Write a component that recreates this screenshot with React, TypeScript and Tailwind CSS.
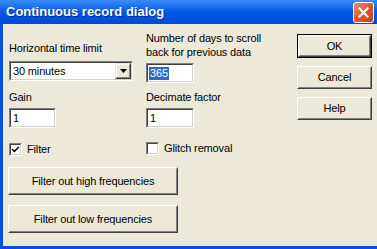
import { Check } from 'lucide-react';

const font = "font-['Liberation_Sans',Arial,sans-serif]";

// classic sunken field border
const Field = ({ value, selected, width }: { value: string; selected?: boolean; width: string }) => (
    <div className={`${width} h-[20px] border border-t-[#808080] border-l-[#808080] border-b-white border-r-white`}>
        <div className="h-full border border-t-[#404040] border-l-[#404040] border-b-[#d4d0c8] border-r-[#d4d0c8] bg-white flex items-center pl-[1px]">
            {selected ? (
                <span className="bg-[#316ac5] text-white leading-[13px] px-[1px]">{value}</span>
            ) : (
                <span className="leading-[13px] px-[1px]">{value}</span>
            )}
        </div>
    </div>
);

const Button = ({ label, width, height, isDefault }: { label: string; width: string; height: string; isDefault?: boolean }) => (
    <div className={`${width} ${height} ${isDefault ? 'border border-black' : ''}`}>
        <div className="h-full border border-t-white border-l-white border-b-[#404040] border-r-[#404040]">
            <div className="h-full border border-t-[#ece9d8] border-l-[#ece9d8] border-b-[#808080] border-r-[#808080] flex items-center justify-center bg-[#ece9d8]">
                {label}
            </div>
        </div>
    </div>
);

const CheckBox = ({ label, checked }: { label: string; checked?: boolean }) => (
    <div className="flex items-center gap-[5px]">
        <div className="w-[13px] h-[13px] border border-t-[#808080] border-l-[#808080] border-b-white border-r-white">
            <div className="h-full border border-t-[#404040] border-l-[#404040] border-b-[#d4d0c8] border-r-[#d4d0c8] bg-white flex items-center justify-center">
                {checked && <Check size={9} strokeWidth={4} className="text-black" />}
            </div>
        </div>
        <span className="leading-[13px]">{label}</span>
    </div>
);

export default function App() {
    return (
        <div className={`w-[377px] h-[249px] flex flex-col overflow-hidden ${font} text-[11px] tracking-[-0.15px] text-black`}>
            {/* title bar */}
            <div className="h-[24px] shrink-0 bg-gradient-to-b from-[#3a8cf8] via-[#0058e8] to-[#0049d6] flex items-center justify-between pl-[6px] pr-[3px]">
                <span className="text-white font-bold text-[13px] tracking-normal [text-shadow:1px_1px_0_#0a2a8a]">Continuous record dialog</span>
                <div className="w-[21px] h-[21px] rounded-[3px] border border-white bg-gradient-to-br from-[#f08a6a] via-[#e2552f] to-[#c8401c] flex items-center justify-center">
                    <svg width="11" height="11" viewBox="0 0 11 11">
                        <path d="M1.5 1.5 L9.5 9.5 M9.5 1.5 L1.5 9.5" stroke="white" strokeWidth="2.2" strokeLinecap="square" />
                    </svg>
                </div>
            </div>

            {/* body */}
            <div className="flex-1 bg-[#0050e0] pl-[3px] pb-[3px]">
                <div className="h-full bg-[#ece9d8] pl-[6px] pt-[7px]">
                    <div className="flex">
                        {/* left column */}
                        <div className="w-[137px] flex flex-col">
                            <div className="mt-[10px] h-[14px] leading-[14px]">Horizontal time limit</div>
                            <div className="mt-[6px] w-[124px] h-[20px] border border-t-[#808080] border-l-[#808080] border-b-white border-r-white">
                                <div className="h-full border border-t-[#404040] border-l-[#404040] border-b-[#d4d0c8] border-r-[#d4d0c8] bg-white flex items-center justify-between">
                                    <span className="pl-[2px] leading-[13px]">30 minutes</span>
                                    <div className="w-[16px] h-[16px] border border-t-[#ece9d8] border-l-[#ece9d8] border-b-[#404040] border-r-[#404040]">
                                        <div className="h-full border border-t-white border-l-white border-b-[#808080] border-r-[#808080] bg-[#ece9d8] flex items-center justify-center">
                                            <svg width="7" height="4" viewBox="0 0 7 4">
                                                <path d="M0 0 H7 L3.5 4 Z" fill="black" />
                                            </svg>
                                        </div>
                                    </div>
                                </div>
                            </div>
                            <div className="mt-[9px] h-[14px] leading-[14px]">Gain</div>
                            <div className="mt-[4px]">
                                <Field value="1" width="w-[47px]" />
                            </div>
                            <div className="mt-[15px]">
                                <CheckBox label="Filter" checked />
                            </div>
                        </div>

                        {/* middle column */}
                        <div className="w-[151px] flex flex-col">
                            <div className="leading-[14px]">
                                <div>Number of days to scroll</div>
                                <div>back for previous data</div>
                            </div>
                            <div className="mt-[4px]">
                                <Field value="365" selected width="w-[48px]" />
                            </div>
                            <div className="mt-[7px] h-[14px] leading-[14px]">Decimate factor</div>
                            <div className="mt-[4px]">
                                <Field value="1" width="w-[48px]" />
                            </div>
                            <div className="mt-[14px]">
                                <CheckBox label="Glitch removal" />
                            </div>
                        </div>

                        {/* right column */}
                        <div className="flex flex-col gap-[8px] pt-[3px]">
                            <Button label="OK" width="w-[75px]" height="h-[24px]" isDefault />
                            <Button label="Cancel" width="w-[75px]" height="h-[23px]" />
                            <Button label="Help" width="w-[75px]" height="h-[23px]" />
                        </div>
                    </div>

                    <div className="flex flex-col gap-[10px] mt-[11px] -ml-[1px]">
                        <Button label="Filter out high frequencies" width="w-[170px]" height="h-[28px]" />
                        <Button label="Filter out low frequencies" width="w-[170px]" height="h-[28px]" />
                    </div>
                </div>
            </div>
        </div>
    );
}
